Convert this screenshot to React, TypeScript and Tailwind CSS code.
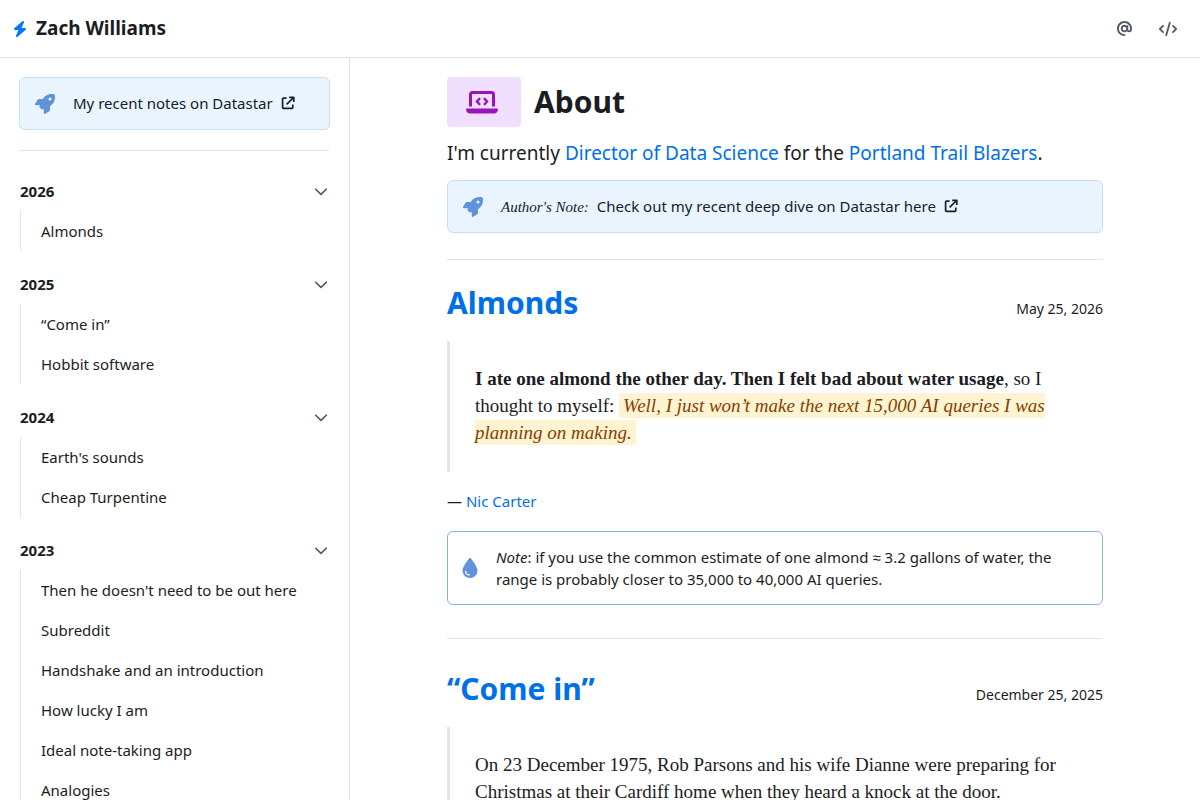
import type { ReactNode } from 'react'
import { useState } from 'react'
import { FaAt, FaBolt, FaChevronDown, FaCode, FaDroplet, FaRocket } from 'react-icons/fa6'

type YearGroup = { year: string; posts: string[] }

const years: YearGroup[] = [
  { year: '2026', posts: ['Almonds'] },
  { year: '2025', posts: ['“Come in”', 'Hobbit software'] },
  { year: '2024', posts: ["Earth's sounds", 'Cheap Turpentine'] },
  {
    year: '2023',
    posts: [
      "Then he doesn't need to be out here",
      'Subreddit',
      'Handshake and an introduction',
      'How lucky I am',
      'Ideal note-taking app',
      'Analogies',
    ],
  },
]

function ExternalIcon() {
  return (
    <svg
      viewBox="0 0 14 14"
      className="ml-2 inline-block h-3.5 w-3.5 align-[-1px]"
      fill="none"
      stroke="currentColor"
      strokeWidth="1.7"
      strokeLinejoin="round"
    >
      <path d="M5.6 2.2H2.4a.8.8 0 0 0-.8.8v8.6c0 .4.4.8.8.8H11a.8.8 0 0 0 .8-.8V8.6" />
      <path d="M8.2 1.3h4.6v4.6M12.6 1.5 5.6 8.4" />
    </svg>
  )
}

function LaptopCodeIcon() {
  return (
    <svg viewBox="0 0 32 24" className="h-6 w-8" fill="none" stroke="currentColor">
      <path d="M4.500 16.500V4.500A2 2 0 0 1 6.500 2.500h19a2 2 0 0 1 2 2v12" strokeWidth="3" />
      <path
        d="M.8 18.500h30.400c.5 0 .8.3.8.8a4.500 4.500 0 0 1-4.500 4.200h-23A4.500 4.500 0 0 1 0 19.300c0-.5.3-.8.8-.8z"
        fill="currentColor"
        stroke="none"
      />
      <path
        d="m13.400 8.800-2.600 2.700 2.600 2.700M18.600 8.800l2.600 2.700-2.600 2.700"
        strokeWidth="2.400"
        strokeLinecap="round"
        strokeLinejoin="round"
      />
    </svg>
  )
}

function Callout({ icon, children }: { icon: ReactNode; children: ReactNode }) {
  return (
    <div className="flex items-center gap-[18px] rounded-md border border-[#c7dff5] bg-[#eaf4ff] px-[15px] py-[13px] text-[15px] leading-[25px] text-[#14202e]">
      <span className="shrink-0 text-[#5f93da]">{icon}</span>
      <div>{children}</div>
    </div>
  )
}

function YearSection({ year, posts }: YearGroup) {
  const [open, setOpen] = useState(true)

  return (
    <section className="mb-[17px]">
      <h2>
        <button
          type="button"
          aria-expanded={open}
          onClick={() => setOpen(!open)}
          className="flex w-full items-center justify-between py-1 text-[15px] leading-6 font-bold"
        >
          {year}
          <FaChevronDown className="h-3.5 w-4 text-[#545868]" />
        </button>
      </h2>
      {open && (
        <ul className="mt-1 border-l border-[#e4e5e9]">
          {posts.map((post) => (
            <li key={post}>
              <a href="#" className="block py-2 pl-5 text-[15px] leading-6">
                {post}
              </a>
            </li>
          ))}
        </ul>
      )}
    </section>
  )
}

function Article({ title, date, children }: { title: string; date: string; children: ReactNode }) {
  return (
    <article>
      <header className="mb-[18px] flex items-baseline justify-between">
        <h2 className="text-[30px] leading-10 font-bold">
          <a href="#" className="text-[#0070e8]">
            {title}
          </a>
        </h2>
        <time className="text-sm">{date}</time>
      </header>
      {children}
    </article>
  )
}

function Quote({ children }: { children: ReactNode }) {
  return (
    <blockquote className="border-l-3 border-[#e4e5e9] pt-6 pr-6 pb-[26px] pl-[25px] font-['Liberation_Serif',serif] text-[19px] leading-[27px]">
      {children}
    </blockquote>
  )
}

export default function App() {
  return (
    <div className="flex h-screen flex-col overflow-hidden bg-white font-['Noto_Sans',sans-serif] text-[15px] leading-6 text-[#1b1d22]">
      <header className="flex items-center justify-between border-b border-[#e0e2e6] px-3 py-3">
        <a href="#" className="flex items-center gap-2 text-[19px] leading-[33px] font-bold">
          <FaBolt className="h-4 w-4 text-[#0078f0]" />
          Zach Williams
        </a>
        <nav className="flex items-center gap-[27px] px-[11px] text-[#545868]">
          <a href="#" aria-label="Email">
            <FaAt className="h-[15px] w-[15px]" />
          </a>
          <a href="#" aria-label="Source code">
            <FaCode className="h-4 w-[18px]" />
          </a>
        </nav>
      </header>

      <div className="flex min-h-0 flex-1">
        <aside className="w-[350px] shrink-0 overflow-hidden border-r border-[#e0e2e6] px-5 pt-[19px]">
          <div className="-mx-px">
            <Callout icon={<FaRocket className="h-5 w-5" />}>
              <a href="#">
                My recent notes on Datastar
                <ExternalIcon />
              </a>
            </Callout>
          </div>
          <hr className="mt-5 mb-6 border-[#e0e2e6]" />
          {years.map((group) => (
            <YearSection key={group.year} {...group} />
          ))}
        </aside>

        <main className="min-w-0 flex-1 overflow-hidden pt-[19px]">
          <div className="mx-auto max-w-[656px]">
            <h1 className="flex items-center gap-[13px] text-[30px] leading-[50px] font-bold">
              <span className="flex h-[50px] w-[74px] items-center justify-center rounded-sm bg-[#f1dfff] pr-1 text-[#9b13bd]">
                <LaptopCodeIcon />
              </span>
              About
            </h1>
            <p className="mt-3 mb-[13px] text-[19px] leading-7">
              I'm currently{' '}
              <a href="#" className="text-[#0070e8]">
                Director of Data Science
              </a>{' '}
              for the{' '}
              <a href="#" className="text-[#0070e8]">
                Portland Trail Blazers
              </a>
              .
            </p>
            <Callout icon={<FaRocket className="h-5 w-5" />}>
              <a href="#">
                <em className="mr-2 font-['Liberation_Serif',serif] leading-none">Author's Note:</em>
                Check out my recent deep dive on Datastar here
                <ExternalIcon />
              </a>
            </Callout>
            <hr className="mt-[26px] mb-[23px] border-[#e0e2e6]" />

            <Article title="Almonds" date="May 25, 2026">
              <Quote>
                <strong>I ate one almond the other day. Then I felt bad about water usage</strong>, so I
                thought to myself:{' '}
                <mark className="rounded-xs bg-[#fff4d2] px-1 py-0.5 text-[#854000] italic">
                  Well, I just won’t make the next 15,000 AI queries I was planning on making.
                </mark>
              </Quote>
              <p className="mt-[17px] mb-[18px]">
                —{' '}
                <a href="#" className="text-[#0070e8]">
                  Nic Carter
                </a>
              </p>
              <aside className="flex items-center gap-[18px] rounded-md border border-[#86b3d9] px-[14px] py-[14px] leading-[22px]">
                <FaDroplet className="h-5 w-4 shrink-0 text-[#5f93da]" />
                <p>
                  <em>Note</em>: if you use the common estimate of one almond ≈ 3.2 gallons of water, the
                  range is probably closer to 35,000 to 40,000 AI queries.
                </p>
              </aside>
            </Article>
            <hr className="mt-[33px] mb-[30px] border-[#e0e2e6]" />

            <Article title="“Come in”" date="December 25, 2025">
              <Quote>
                On 23 December 1975, Rob Parsons and his wife Dianne were preparing for Christmas at their
                Cardiff home when they heard a knock at the door.
              </Quote>
            </Article>
          </div>
        </main>
      </div>
    </div>
  )
}
